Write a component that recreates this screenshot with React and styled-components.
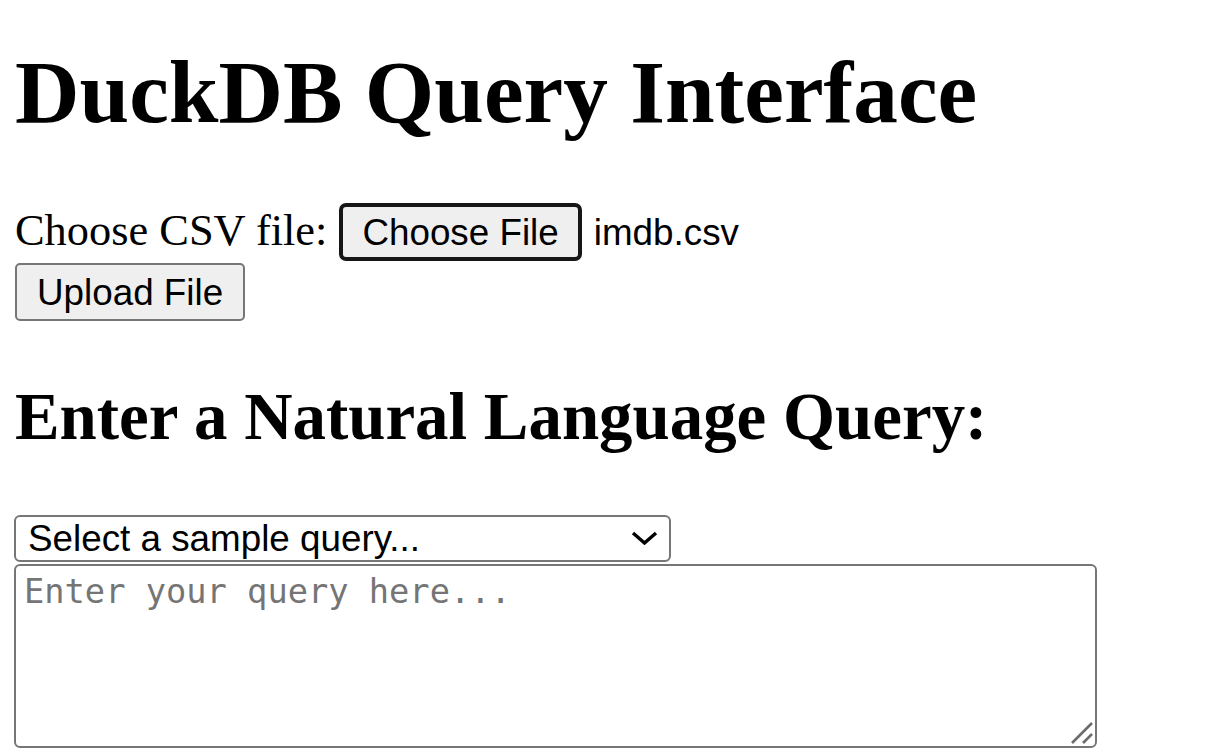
import React from "react";
import styled, { createGlobalStyle } from "styled-components";

const Global = createGlobalStyle`
  html, body { margin: 0; padding: 0; background: #ffffff; }
  body { font-family: "Liberation Serif", "Times New Roman", serif; color: #000; }
  * { box-sizing: border-box; }
`;

const Page = styled.main`
  padding: 0 14px 0 14px;
  display: flex;
  flex-direction: column;
  align-items: flex-start;
`;

const Title = styled.h1`
  margin: 41px 0 0 1px;
  font-size: 89.3px;
  line-height: 102px;
  font-weight: 700;
`;

const UploadRow = styled.div`
  display: flex;
  align-items: baseline;
  margin-top: 60px;
`;

const Label = styled.label`
  font-size: 44.4px;
  line-height: normal;
  margin-left: 1px;
`;

const Button = styled.button`
  height: 58px;
  padding: 3px ${(p) => p.$padX || 20}px 0;
  margin: ${(p) => p.$margin || "0"};
  font-family: "Liberation Sans", Arial, sans-serif;
  font-size: 36.8px;
  line-height: 1.15;
  color: #000;
  background: #efefef;
  border: ${(p) => (p.$focused ? "4px solid #161616" : "2px solid #767676")};
  border-radius: ${(p) => (p.$focused ? "7px" : "5px")};
  cursor: pointer;
`;

const FileName = styled.span`
  font-family: "Liberation Sans", Arial, sans-serif;
  font-size: 36.8px;
  margin-left: 12px;
`;

const Heading = styled.h2`
  margin: 57px 0 0 1px;
  font-size: 66.9px;
  line-height: 77px;
  font-weight: 700;
`;

const SelectWrap = styled.div`
  position: relative;
  margin-top: 60px;
  width: 657px;
  height: 47px;
`;

const Select = styled.select`
  appearance: none;
  -webkit-appearance: none;
  width: 100%;
  height: 100%;
  padding: 0 60px 0 12px;
  font-family: "Liberation Sans", Arial, sans-serif;
  font-size: 36.8px;
  line-height: 43px;
  color: #000;
  background: #fff;
  border: 2px solid #767676;
  border-radius: 6px;
  outline: none;
`;

const Chevron = styled.svg`
  position: absolute;
  right: 13px;
  top: 16px;
  width: 27px;
  height: 14px;
  pointer-events: none;
`;

const AreaWrap = styled.div`
  position: relative;
  margin-top: 2px;
  width: 1083px;
  height: 184px;
`;

const QueryArea = styled.textarea`
  width: 100%;
  height: 100%;
  padding: 6px 8px;
  font-family: "DejaVu Sans Mono", "Liberation Mono", monospace;
  font-size: 33.7px;
  line-height: 40px;
  color: #000;
  border: 2px solid #767676;
  border-radius: 6px;
  resize: none;
  outline: none;
  &::placeholder { color: #757575; }
`;

const Grip = styled.svg`
  position: absolute;
  right: 3px;
  bottom: 3px;
  width: 24px;
  height: 24px;
  pointer-events: none;
`;

export default function App() {
  return (
    <>
      <Global />
      <Page>
        <Title>DuckDB Query Interface</Title>
        <UploadRow>
          <Label htmlFor="csv">Choose CSV file:</Label>
          <Button id="csv" $focused $padX={19} $margin="0 0 0 12px">Choose File</Button>
          <FileName>imdb.csv</FileName>
        </UploadRow>
        <Button $padX={20} $margin="2px 0 0 1px">Upload File</Button>
        <Heading>Enter a Natural Language Query:</Heading>
        <SelectWrap>
          <Select defaultValue="">
            <option value="">Select a sample query...</option>
            <option value="1">Show the top 10 movies by rating</option>
            <option value="2">Count movies per genre</option>
          </Select>
          <Chevron viewBox="0 0 27 14">
            <path d="M2 2 L13.5 12 L25 2" fill="none" stroke="#000" strokeWidth="3.4" strokeLinecap="butt" strokeLinejoin="miter" />
          </Chevron>
        </SelectWrap>
        <AreaWrap>
          <QueryArea rows={4} placeholder="Enter your query here..." />
          <Grip viewBox="0 0 24 24">
            <path d="M2 22 L22 2 M13 22 L22 13" stroke="#6b6b6b" strokeWidth="2.6" fill="none" />
          </Grip>
        </AreaWrap>
      </Page>
    </>
  );
}
